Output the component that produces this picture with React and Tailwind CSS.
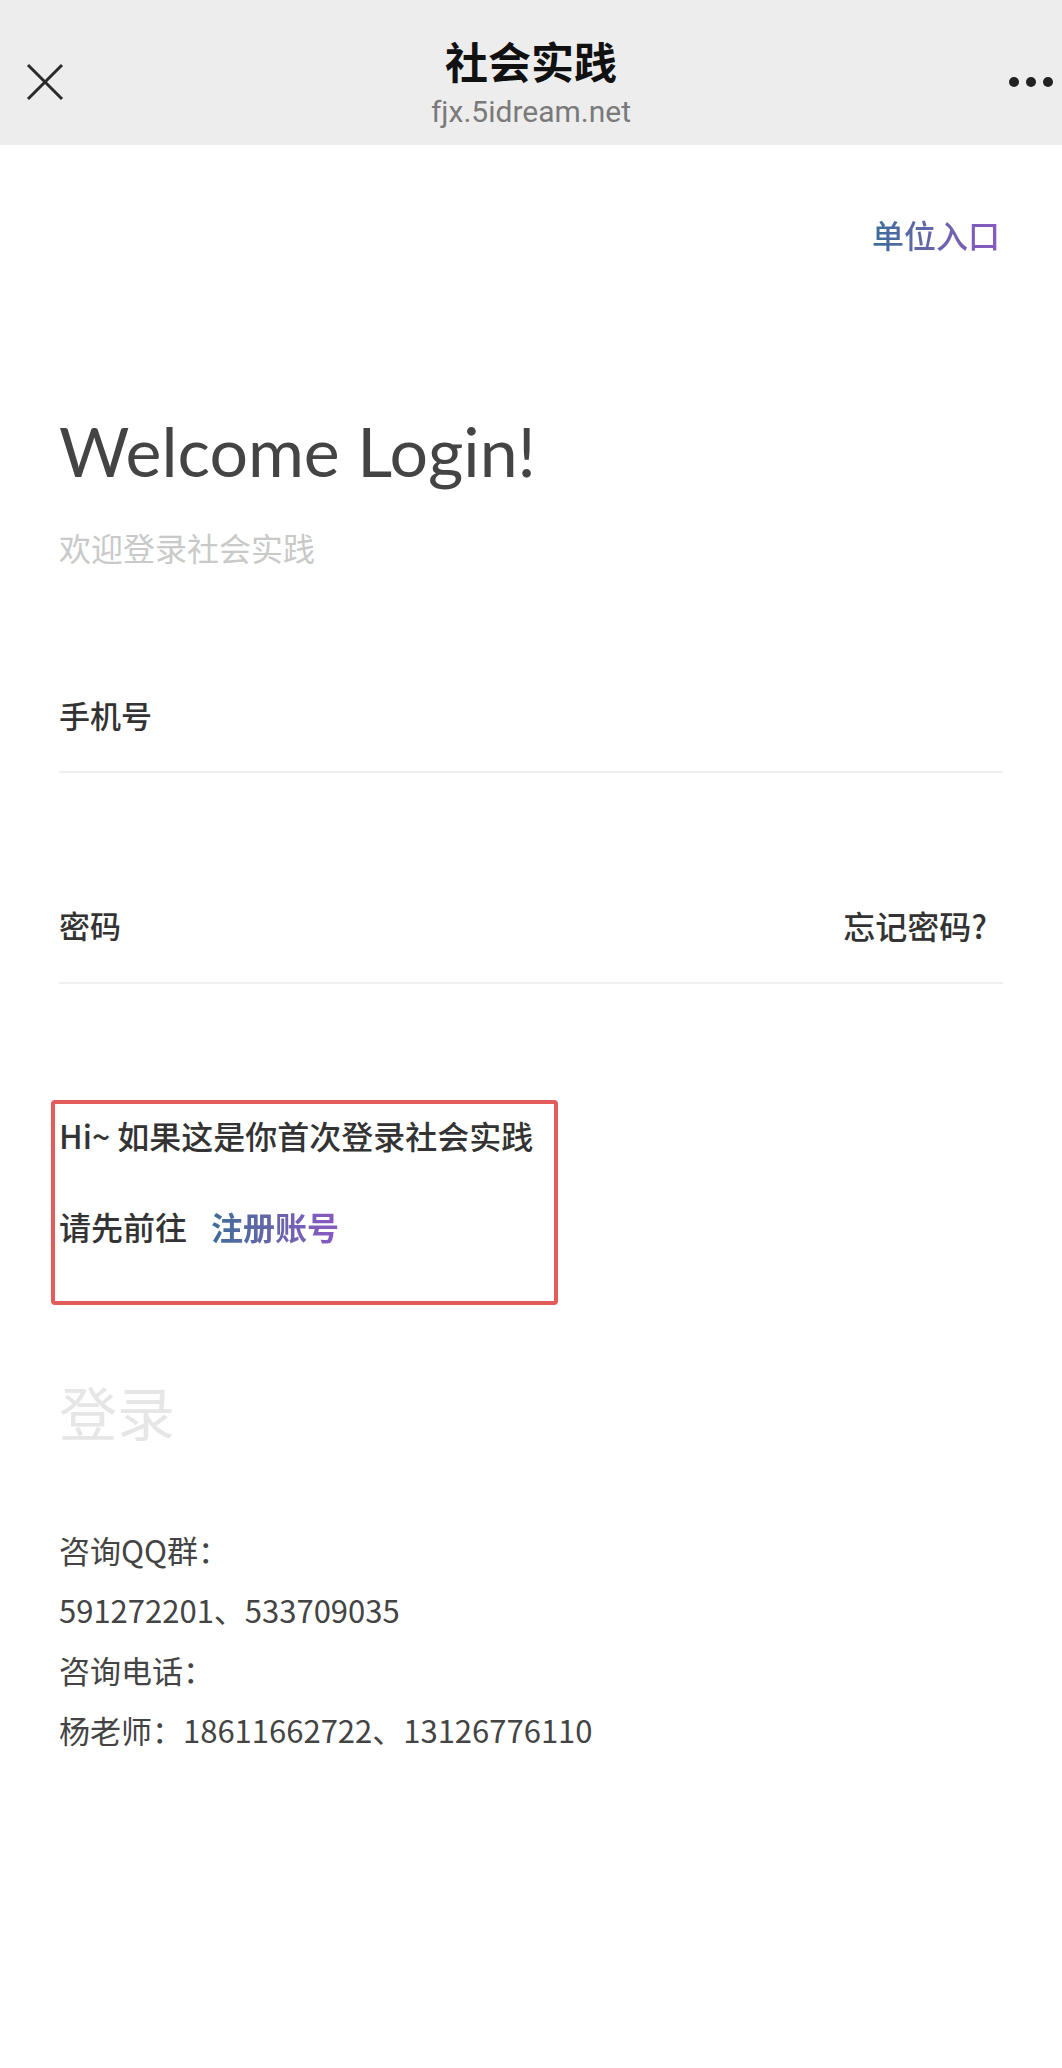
import React from 'react';

const contacts = ['咨询QQ群：', '591272201、533709035', '咨询电话：', '杨老师：18611662722、13126776110'];

export default function App() {
  return (
    <div className="min-h-[2068px] w-full bg-white font-['Noto_Sans_CJK_SC',sans-serif]">
      {/* HEADER */}
      <header className="flex h-[145px] items-start bg-[#ededed]">
        <div className="flex w-[120px] pl-[26px] pt-[63px]">
          <svg width="38" height="38" viewBox="0 0 38 38" fill="none" stroke="#2a2a2a" strokeWidth="3">
            <path d="M2 2 L36 36 M36 2 L2 36" />
          </svg>
        </div>
        <div className="flex flex-1 flex-col items-center pt-[35px]">
          <span className="text-[43px] leading-[50px] font-semibold text-[#111]">社会实践</span>
          <span className="mt-[10px] font-['Roboto',sans-serif] text-[30px] leading-[34px] text-[#7a7a7a]">fjx.5idream.net</span>
        </div>
        <div className="flex w-[120px] justify-end gap-[7px] pr-[9px] pt-[77px]">
          <span className="h-[10px] w-[10px] rounded-full bg-[#222]" />
          <span className="h-[10px] w-[10px] rounded-full bg-[#222]" />
          <span className="h-[10px] w-[10px] rounded-full bg-[#222]" />
        </div>
      </header>

      <main className="px-[59px]">
        {/* UNIT ENTRY */}
        <div className="mt-[69px] flex justify-end pr-[3px]">
          <a className="bg-linear-to-r from-[#3b6d98] to-[#8a58c2] bg-clip-text text-[32px] leading-[40px] font-medium text-transparent">单位入口</a>
        </div>

        {/* TITLE */}
        <h1 className="mt-[156px] font-['Lato',sans-serif] text-[68px] leading-[82px] font-normal text-[#444]">Welcome Login!</h1>
        <p className="mt-[35px] text-[32px] leading-[40px] text-[#c9c9c9]">欢迎登录社会实践</p>

        {/* FIELDS */}
        <div className="mt-[128px] border-b-2 border-[#f0f0f0] pb-[36px]">
          <span className="text-[31px] leading-[40px] font-medium text-[#333]">手机号</span>
        </div>
        <div className="mt-[132px] flex justify-between border-b-2 border-[#f0f0f0] pb-[37px]">
          <span className="text-[31px] leading-[40px] font-medium text-[#333]">密码</span>
          <span className="pr-[16px] text-[32px] leading-[40px] font-medium text-[#333]">忘记密码?</span>
        </div>

        {/* FIRST LOGIN HINT */}
        <div className="mt-[116px] ml-[-8px] h-[205px] w-[507px] rounded-[4px] border-4 border-[#e35b5b] pl-[4px] pt-[11px]">
          <p className="text-[32px] leading-[40px] font-medium text-[#333]">Hi~ 如果这是你首次登录社会实践</p>
          <p className="mt-[51px] text-[32px] leading-[40px] font-medium text-[#333]">
            请先前往
            <a className="ml-[24px] bg-linear-to-r from-[#3b6d98] to-[#8a58c2] bg-clip-text font-bold text-transparent">注册账号</a>
          </p>
        </div>

        {/* LOGIN BUTTON */}
        <button className="mt-[71px] block text-[58px] leading-[70px] text-[#e6e6e6]">登录</button>

        {/* CONTACT */}
        <div className="mt-[74px]">
          {contacts.map((line) => (
            <p key={line} className="text-[31px] leading-[60px] text-[#444]">{line}</p>
          ))}
        </div>
      </main>
    </div>
  );
}
